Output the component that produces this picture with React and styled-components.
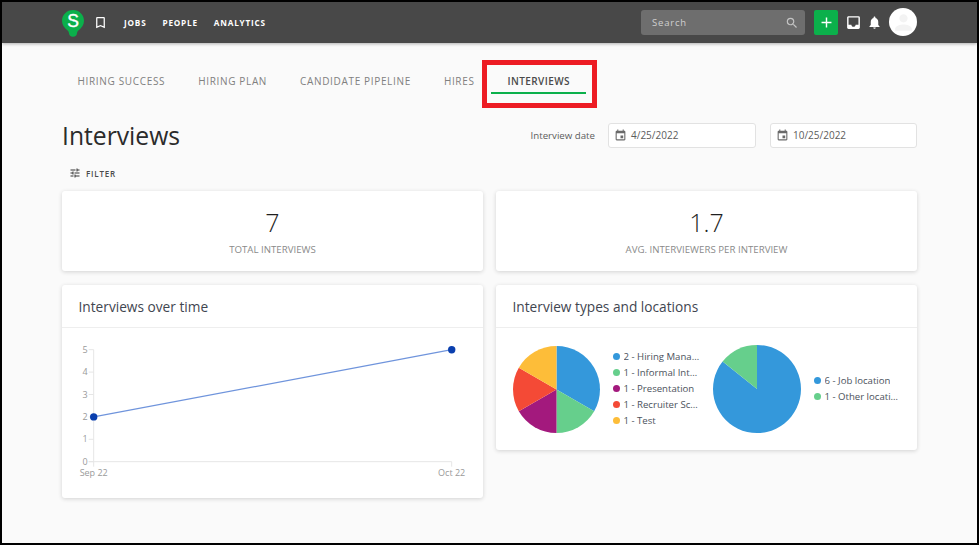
import React from 'react';
import styled, { createGlobalStyle } from 'styled-components';
import { MdBookmarkBorder, MdSearch, MdAdd, MdInbox, MdNotifications, MdPerson, MdTune, MdEvent } from 'react-icons/md';

const GlobalStyle = createGlobalStyle`
  html, body { margin: 0; padding: 0; background: #fff; }
  * { box-sizing: border-box; }
  body { font-family: 'Open Sans', 'Liberation Sans', sans-serif; }
`;

const Frame = styled.div`
  width: 979px;
  height: 545px;
  border: 2px solid #000;
  background: #fafafa;
  overflow: hidden;
`;

const Header = styled.header`
  height: 41px;
  background: #484848;
  box-shadow: 0 1px 3px rgba(0, 0, 0, 0.3);
  display: flex;
  align-items: center;
  padding: 0 60px;
  color: #fff;
`;

const Logo = styled.svg`
  width: 22px;
  height: 27px;
  flex: none;
  margin-top: 1px;
`;

const BookmarkBtn = styled.span`
  display: flex;
  margin-left: 9px;
  font-size: 15px;
`;

const Nav = styled.nav`
  display: flex;
  gap: 16px;
  margin-left: 16px;
`;

const NavLink = styled.a`
  font-size: 8.2px;
  font-weight: 700;
  letter-spacing: 0.8px;
`;

const HeaderRight = styled.div`
  margin-left: auto;
  display: flex;
  align-items: center;
`;

const Search = styled.div`
  width: 164px;
  height: 25px;
  background: #6e6e6e;
  border-radius: 3px;
  display: flex;
  align-items: center;
  justify-content: space-between;
  padding: 0 6px 0 11px;
  font-size: 9.5px;
  letter-spacing: 0.8px;
  color: #d0d0d0;
  svg { font-size: 14px; color: #c4c4c4; }
`;

const AddBtn = styled.button`
  width: 24px;
  height: 25px;
  margin-left: 9px;
  border: 0;
  border-radius: 2px;
  padding: 0;
  background: #0bb04b;
  color: #fff;
  display: flex;
  align-items: center;
  justify-content: center;
  font-size: 17px;
`;

const IconBtn = styled.span`
  display: flex;
  font-size: ${p => p.$size}px;
  margin-left: ${p => p.$left}px;
`;

const Avatar = styled.div`
  width: 28px;
  height: 28px;
  margin-left: 7px;
  margin-top: -1px;
  border-radius: 50%;
  background: #fff;
  display: flex;
  align-items: center;
  justify-content: center;
  font-size: 25px;
  color: #f3f3f3;
  overflow: hidden;
`;

const Main = styled.main`
  padding: 0 60px;
`;

const Tabs = styled.div`
  display: flex;
  height: 38px;
  margin: 17px 0 0 -1px;
`;

const Tab = styled.div`
  position: relative;
  padding: 10px 16.5px 0;
  height: 34px;
  display: flex;
  align-items: center;
  font-size: 10px;
  letter-spacing: ${p => (p.$active ? '0.4px' : '0.66px')};
  font-weight: ${p => (p.$active ? 600 : 400)};
  color: ${p => (p.$active ? '#4a4a4a' : '#808080')};
  border-bottom: 2px solid ${p => (p.$active ? '#0bb04b' : 'transparent')};
  white-space: nowrap;
`;

/* red call-out drawn on top of the active tab */
const Callout = styled.span`
  position: absolute;
  left: -9px;
  top: 0;
  width: 115px;
  height: 48px;
  border: 5px solid #ed1c24;
`;

const TitleRow = styled.div`
  display: flex;
  align-items: center;
  height: 36px;
  margin-top: 20px;
`;

const Title = styled.h1`
  margin: 0;
  font-size: 24.7px;
  font-weight: 400;
  color: #2b2b2b;
  line-height: 36px;
`;

const DateLabel = styled.span`
  margin-left: auto;
  margin-right: 13px;
  margin-bottom: 2px;
  font-size: 9.7px;
  color: #5c5c5c;
`;

const DateField = styled.div`
  width: ${p => p.$width}px;
  height: 25px;
  margin-left: ${p => p.$left || 0}px;
  margin-bottom: 2px;
  background: #fff;
  border: 1px solid #e2e2e2;
  border-radius: 3px;
  display: flex;
  align-items: center;
  gap: 4px;
  padding-left: 5px;
  font-size: 10px;
  color: #5c5c5c;
  svg { font-size: 13px; color: #6a6a6a; }
`;

const FilterBtn = styled.div`
  display: flex;
  align-items: center;
  gap: 5px;
  height: 20px;
  margin-top: 9px;
  padding-left: 7px;
  font-size: 8px;
  font-weight: 600;
  letter-spacing: 0.8px;
  color: #4a4a4a;
  svg { font-size: 12px; color: #333; }
`;

const Grid = styled.div`
  display: grid;
  grid-template-columns: 421px 421px;
  column-gap: 13px;
  row-gap: 14px;
  margin-top: 8px;
  align-items: start;
`;

const Card = styled.section`
  background: #fff;
  border-radius: 3px;
  box-shadow: 0 1px 4px rgba(0, 0, 0, 0.16);
`;

const StatCard = styled(Card)`
  height: 80px;
  text-align: center;
  padding-top: 14px;
`;

const StatValue = styled.div`
  font-size: 25px;
  font-weight: 300;
  line-height: 34px;
  color: #1f1f1f;
`;

const StatLabel = styled.div`
  font-size: 9.7px;
  line-height: 14px;
  margin-top: 4px;
  color: #8a8a8a;
`;

const CardTitle = styled.h2`
  margin: 0;
  height: 43px;
  padding: 0 16.5px;
  display: flex;
  align-items: center;
  font-size: 13.7px;
  font-weight: 400;
  color: #3f4650;
  border-bottom: 1px solid #eeeeee;
`;

const Chart = styled.svg`
  display: block;
  width: 421px;
  height: 170px;
`;

const PieRow = styled.div`
  display: flex;
  align-items: center;
  height: 122px;
  padding-left: 17px;
`;

const Pie = styled.svg`
  width: ${p => p.$size}px;
  height: ${p => p.$size}px;
  flex: none;
`;

const Legend = styled.ul`
  list-style: none;
  margin: 0 12px 2px 13px;
  padding: 0;
  width: ${p => p.$width}px;
`;

const LegendItem = styled.li`
  display: flex;
  align-items: center;
  gap: 3.5px;
  height: 16px;
  font-size: 9.6px;
  color: #4b525c;
`;

const Dot = styled.i`
  width: 7px;
  height: 7px;
  flex: none;
  border-radius: 50%;
  background: ${p => p.$color};
`;

const LegendText = styled.span`
  min-width: 0;
  overflow: hidden;
  white-space: nowrap;
  text-overflow: ellipsis;
`;

const BLUE = '#3498db';
const GREEN = '#66cf8c';
const PURPLE = '#a3197d';
const RED = '#f44a36';
const YELLOW = '#fdbd39';

const typeSlices = [
  { label: '2 - Hiring Manager', value: 2, color: BLUE },
  { label: '1 - Informal Interview', value: 1, color: GREEN },
  { label: '1 - Presentation', value: 1, color: PURPLE },
  { label: '1 - Recruiter Screen', value: 1, color: RED },
  { label: '1 - Test', value: 1, color: YELLOW },
];

const locationSlices = [
  { label: '6 - Job location', value: 6, color: BLUE },
  { label: '1 - Other location', value: 1, color: GREEN },
];

function PieChart({ slices, size }) {
  const total = slices.reduce((sum, s) => sum + s.value, 0);
  let angle = 0;
  const point = a => `${44 + 44 * Math.sin(a)} ${44 - 44 * Math.cos(a)}`;
  return (
    <Pie $size={size} viewBox="0 0 88 88">
      {slices.map(s => {
        const start = angle;
        angle += (s.value / total) * Math.PI * 2;
        const large = angle - start > Math.PI ? 1 : 0;
        return <path key={s.label} d={`M44 44L${point(start)}A44 44 0 ${large} 1 ${point(angle)}Z`} fill={s.color} />;
      })}
    </Pie>
  );
}

function ChartLegend({ slices, width }) {
  return (
    <Legend $width={width}>
      {slices.map(s => (
        <LegendItem key={s.label}>
          <Dot $color={s.color} />
          <LegendText>{s.label}</LegendText>
        </LegendItem>
      ))}
    </Legend>
  );
}

function LineChart() {
  // card starts at x=62, body at y=328 in the page
  const x0 = 31.7;
  const x1 = 389.7;
  const y = v => 133.7 - v * 22.4;
  const labelStyle = { fontSize: 9, fill: '#9a9a9a', fontFamily: "'Open Sans', sans-serif" };
  return (
    <Chart viewBox="0 0 421 170">
      <line x1={x0} y1={y(5)} x2={x0} y2={y(0) + 5} stroke="#e6e6e6" />
      <line x1={x0 - 5} y1={y(0)} x2={x1} y2={y(0)} stroke="#e6e6e6" />
      <line x1={x1} y1={y(0)} x2={x1} y2={y(0) + 5} stroke="#e6e6e6" />
      {[0, 1, 2, 3, 4, 5].map(v => (
        <g key={v}>
          <line x1={x0 - 5} y1={y(v)} x2={x0} y2={y(v)} stroke="#e6e6e6" />
          <text x={x0 - 6} y={y(v) + 3} textAnchor="end" style={labelStyle}>{v}</text>
        </g>
      ))}
      <text x={x0} y={148} textAnchor="middle" style={labelStyle}>Sep 22</text>
      <text x={x1} y={148} textAnchor="middle" style={labelStyle}>Oct 22</text>
      <line x1={x0} y1={y(2)} x2={x1} y2={y(5)} stroke="#6f94dc" strokeWidth="1.2" />
      <circle cx={x0} cy={y(2)} r="3.7" fill="#0a3fae" />
      <circle cx={x1} cy={y(5)} r="3.7" fill="#0a3fae" />
    </Chart>
  );
}

export default function App() {
  return (
    <Frame>
      <GlobalStyle />
      <Header>
        <Logo viewBox="0 0 22 27">
          <path d="M11 0C4.900 0 0 4.800 0 10.800c0 4.200 2.400 7.400 5.600 9.600.9.700 1.200 1.500 1.400 2.800.3 2.300 1.400 3.500 4 3.500s3.700-1.200 4-3.500c.2-1.300.5-2.100 1.400-2.800C19.600 18.200 22 15 22 10.800 22 4.800 17.100 0 11 0z" fill="#0bb04b" />
          <text x="11" y="17" textAnchor="middle" fill="#fff" fontSize="17.5" fontWeight="400" stroke="#fff" strokeWidth="0.4" fontFamily="'Liberation Sans', sans-serif">S</text>
        </Logo>
        <BookmarkBtn><MdBookmarkBorder /></BookmarkBtn>
        <Nav>
          <NavLink>JOBS</NavLink>
          <NavLink>PEOPLE</NavLink>
          <NavLink>ANALYTICS</NavLink>
        </Nav>
        <HeaderRight>
          <Search>
            <span>Search</span>
            <MdSearch />
          </Search>
          <AddBtn><MdAdd /></AddBtn>
          <IconBtn $size={17} $left={7}><MdInbox /></IconBtn>
          <IconBtn $size={15} $left={5}><MdNotifications /></IconBtn>
          <Avatar><MdPerson /></Avatar>
        </HeaderRight>
      </Header>
      <Main>
        <Tabs>
          <Tab>HIRING SUCCESS</Tab>
          <Tab>HIRING PLAN</Tab>
          <Tab>CANDIDATE PIPELINE</Tab>
          <Tab>HIRES</Tab>
          <Tab $active>
            INTERVIEWS
            <Callout />
          </Tab>
        </Tabs>
        <TitleRow>
          <Title>Interviews</Title>
          <DateLabel>Interview date</DateLabel>
          <DateField $width={148}><MdEvent /><span>4/25/2022</span></DateField>
          <DateField $width={147} $left={14}><MdEvent /><span>10/25/2022</span></DateField>
        </TitleRow>
        <FilterBtn><MdTune /><span>FILTER</span></FilterBtn>
        <Grid>
          <StatCard>
            <StatValue>7</StatValue>
            <StatLabel>TOTAL INTERVIEWS</StatLabel>
          </StatCard>
          <StatCard>
            <StatValue>1.7</StatValue>
            <StatLabel>AVG. INTERVIEWERS PER INTERVIEW</StatLabel>
          </StatCard>
          <Card>
            <CardTitle>Interviews over time</CardTitle>
            <LineChart />
          </Card>
          <Card>
            <CardTitle>Interview types and locations</CardTitle>
            <PieRow>
              <PieChart slices={typeSlices} size={87} />
              <ChartLegend slices={typeSlices} width={88} />
              <PieChart slices={locationSlices} size={88} />
              <ChartLegend slices={locationSlices} width={88} />
            </PieRow>
          </Card>
        </Grid>
      </Main>
    </Frame>
  );
}
